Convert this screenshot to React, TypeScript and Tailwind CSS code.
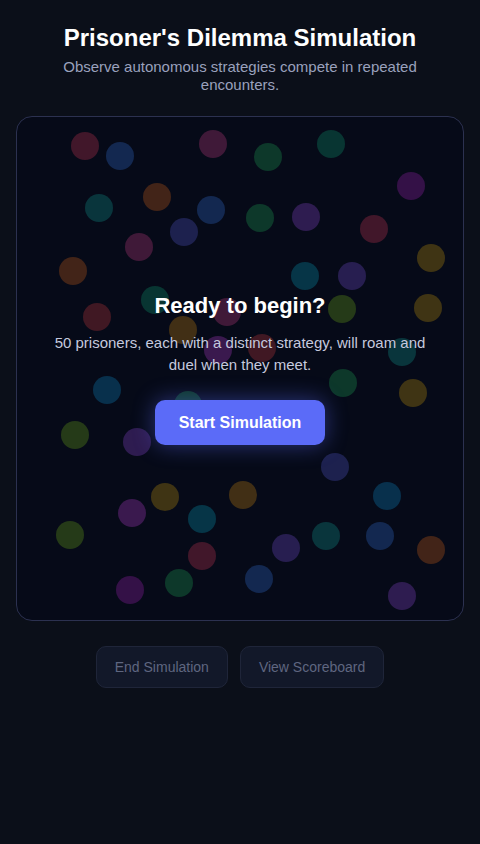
const dots: [number, number, string][] = [
  [85, 146, "#f43f5e"],
  [120, 156, "#3b82f6"],
  [213, 144, "#ec4899"],
  [268, 157, "#22c55e"],
  [331, 144, "#10b981"],
  [411, 186, "#c026d3"],
  [99, 208, "#14b8a6"],
  [157, 197, "#f97316"],
  [211, 210, "#3b82f6"],
  [260, 218, "#22c55e"],
  [306, 217, "#a855f7"],
  [184, 232, "#6366f1"],
  [374, 229, "#f43f5e"],
  [139, 247, "#ec4899"],
  [73, 271, "#f97316"],
  [305, 276, "#06b6d4"],
  [352, 276, "#8b5cf6"],
  [431, 258, "#eab308"],
  [155, 300, "#10b981"],
  [97, 317, "#ef4444"],
  [342, 309, "#84cc16"],
  [428, 308, "#eab308"],
  [227, 312, "#ec4899"],
  [183, 330, "#f59e0b"],
  [218, 350, "#d946ef"],
  [262, 348, "#ef4444"],
  [402, 352, "#14b8a6"],
  [107, 390, "#0ea5e9"],
  [343, 383, "#22c55e"],
  [413, 393, "#eab308"],
  [75, 435, "#84cc16"],
  [137, 442, "#a855f7"],
  [188, 405, "#22c55e"],
  [335, 467, "#6366f1"],
  [165, 497, "#eab308"],
  [243, 495, "#f59e0b"],
  [387, 496, "#0ea5e9"],
  [132, 513, "#d946ef"],
  [202, 519, "#06b6d4"],
  [70, 535, "#84cc16"],
  [326, 536, "#14b8a6"],
  [380, 536, "#3b82f6"],
  [286, 548, "#8b5cf6"],
  [202, 556, "#f43f5e"],
  [431, 550, "#f97316"],
  [130, 590, "#c026d3"],
  [179, 583, "#22c55e"],
  [259, 579, "#3b82f6"],
  [402, 596, "#a855f7"],
];

export default function App() {
  return (
    <div className="min-h-[844px] bg-[#0b0f19] font-['Liberation_Sans',Arial,sans-serif] flex flex-col items-center pt-[22px]">
      <h1 className="text-[24px] leading-8 font-bold text-white text-center">
        Prisoner's Dilemma Simulation
      </h1>
      <p className="mt-1 text-[15px] leading-[18px] text-[#9aa1bd] text-center max-w-[360px]">
        Observe autonomous strategies compete in repeated encounters.
      </p>

      <div className="relative mt-[22px] w-[448px] h-[505px] rounded-2xl border border-[#2c3150] bg-[#060a18] overflow-hidden flex flex-col items-center justify-center">
        {dots.map(([x, y, c], i) => (
          <div
            key={i}
            className="absolute w-7 h-7 rounded-full opacity-25"
            style={{ left: x - 17 - 14, top: y - 117 - 14, background: c }}
          />
        ))}
        <div className="relative flex flex-col items-center">
          <h2 className="text-[22px] leading-7 font-bold text-white">Ready to begin?</h2>
          <p className="mt-3 max-w-[380px] text-[15px] leading-[22px] text-[#c5c9de] text-center">
            50 prisoners, each with a distinct strategy, will roam and duel when they meet.
          </p>
          <button className="mt-6 w-[170px] h-[45px] rounded-[10px] bg-[#5b6bf8] text-white text-[16px] font-bold shadow-[0_0_22px_rgba(91,107,248,0.45)]">
            Start Simulation
          </button>
        </div>
      </div>

      <div className="mt-[25px] flex gap-3">
        <button className="h-[42px] px-[18px] rounded-[10px] bg-[#121829] border border-[#1f2539] text-[14px] text-[#5f6680]">
          End Simulation
        </button>
        <button className="h-[42px] px-[18px] rounded-[10px] bg-[#121829] border border-[#1f2539] text-[14px] text-[#5f6680]">
          View Scoreboard
        </button>
      </div>
    </div>
  );
}
